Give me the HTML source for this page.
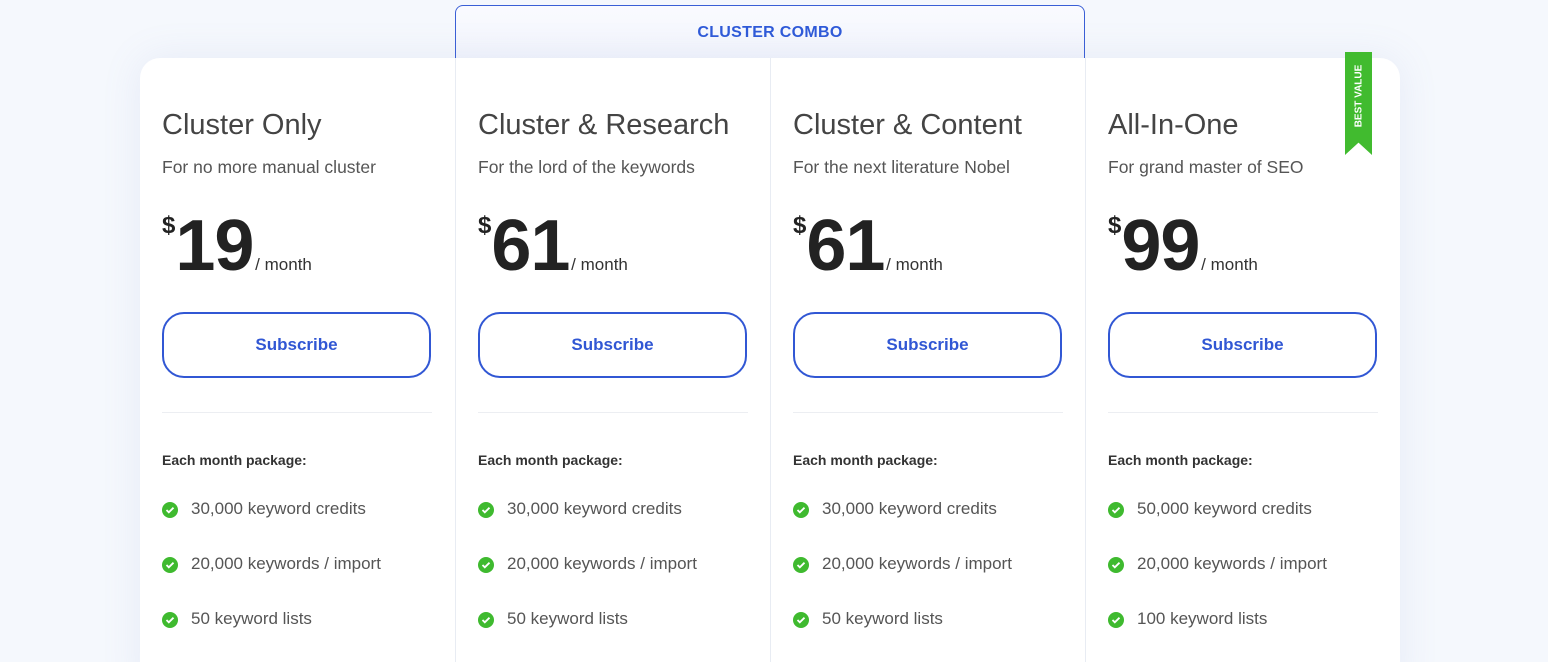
<!DOCTYPE html>
<html><head><style>
*{margin:0;padding:0;box-sizing:border-box}
html,body{width:1548px;height:662px;overflow:hidden}
body{background:#f5f8fd;font-family:"Liberation Sans",sans-serif;position:relative}
.card{position:absolute;left:140px;top:58px;width:1260px;height:640px;background:#fff;border-radius:20px;box-shadow:0 0 40px rgba(120,140,200,.12)}
.tab{position:absolute;left:455px;top:5px;width:630px;height:60px;border:1px solid #3a5fd6;border-bottom:none;border-radius:8px 8px 0 0;background:linear-gradient(#fafbff,#f1f4fc);text-align:center;color:#2f5ad8;font-weight:bold;font-size:16px;line-height:54px;letter-spacing:.3px}
.col{position:absolute;top:58px;width:315px;height:620px;}
.col.b{border-left:1px solid #e8ecf3}
.in{position:absolute;left:22px;width:270px}
h2{position:absolute;top:51px;font-size:29px;font-weight:normal;color:#444;white-space:nowrap}
.sub{position:absolute;top:99px;font-size:17.5px;color:#555;white-space:nowrap}
.price{position:absolute;top:148px;color:#222;white-space:nowrap}
.price .d{font-size:24px;font-weight:bold;vertical-align:top;position:relative;top:6px}
.price .n{font-size:72px;font-weight:bold;letter-spacing:-1px;line-height:80px}
.price .m{font-size:17px;color:#333;margin-left:-3px}
.btn{position:absolute;top:254px;width:269px;height:66px;border:2px solid #3157d4;border-radius:22px;text-align:center;line-height:62px;color:#3157d4;font-size:17px;font-weight:bold}
.hr{position:absolute;top:354px;width:270px;border-top:1px solid #eceef2}
.pk{position:absolute;top:394px;font-size:14px;font-weight:bold;color:#333}
.it{position:absolute;font-size:17px;color:#555;white-space:nowrap;padding-left:29px}
.it:before{content:"";position:absolute;left:0;top:3px;width:16px;height:16px;border-radius:50%;background:#3fba2f}
.it svg{position:absolute;left:3px;top:6px}
.rib{position:absolute;left:1345px;top:52px;width:27px;height:103px;background:#41bb2f;clip-path:polygon(0 0,100% 0,100% 100%,50% 88%,0 100%)}
.rib span{position:absolute;left:50%;top:44px;transform:translate(-50%,-50%) rotate(-90deg);color:#fff;font-size:10px;font-weight:bold;white-space:nowrap}
</style></head><body>
<div class="tab">CLUSTER COMBO</div>
<div class="card"></div>

<div class="col" style="left:140px"><div class="in">
<h2>Cluster Only</h2><div class="sub">For no more manual cluster</div>
<div class="price"><span class="d">$</span><span class="n">19</span><span class="m"> / month</span></div>
<div class="btn">Subscribe</div><div class="hr"></div><div class="pk">Each month package:</div>
<div class="it" style="top:441px"><svg width="10" height="10" viewBox="0 0 10 10"><path d="M1.5 5l2.3 2.3L8.5 2.7" stroke="#fff" stroke-width="1.8" fill="none"/></svg>30,000 keyword credits</div>
<div class="it" style="top:496px"><svg width="10" height="10" viewBox="0 0 10 10"><path d="M1.5 5l2.3 2.3L8.5 2.7" stroke="#fff" stroke-width="1.8" fill="none"/></svg>20,000 keywords / import</div>
<div class="it" style="top:551px"><svg width="10" height="10" viewBox="0 0 10 10"><path d="M1.5 5l2.3 2.3L8.5 2.7" stroke="#fff" stroke-width="1.8" fill="none"/></svg>50 keyword lists</div>
</div></div>

<div class="col b" style="left:455px"><div class="in">
<h2>Cluster &amp; Research</h2><div class="sub">For the lord of the keywords</div>
<div class="price"><span class="d">$</span><span class="n">61</span><span class="m"> / month</span></div>
<div class="btn">Subscribe</div><div class="hr"></div><div class="pk">Each month package:</div>
<div class="it" style="top:441px"><svg width="10" height="10" viewBox="0 0 10 10"><path d="M1.5 5l2.3 2.3L8.5 2.7" stroke="#fff" stroke-width="1.8" fill="none"/></svg>30,000 keyword credits</div>
<div class="it" style="top:496px"><svg width="10" height="10" viewBox="0 0 10 10"><path d="M1.5 5l2.3 2.3L8.5 2.7" stroke="#fff" stroke-width="1.8" fill="none"/></svg>20,000 keywords / import</div>
<div class="it" style="top:551px"><svg width="10" height="10" viewBox="0 0 10 10"><path d="M1.5 5l2.3 2.3L8.5 2.7" stroke="#fff" stroke-width="1.8" fill="none"/></svg>50 keyword lists</div>
</div></div>

<div class="col b" style="left:770px"><div class="in">
<h2>Cluster &amp; Content</h2><div class="sub">For the next literature Nobel</div>
<div class="price"><span class="d">$</span><span class="n">61</span><span class="m"> / month</span></div>
<div class="btn">Subscribe</div><div class="hr"></div><div class="pk">Each month package:</div>
<div class="it" style="top:441px"><svg width="10" height="10" viewBox="0 0 10 10"><path d="M1.5 5l2.3 2.3L8.5 2.7" stroke="#fff" stroke-width="1.8" fill="none"/></svg>30,000 keyword credits</div>
<div class="it" style="top:496px"><svg width="10" height="10" viewBox="0 0 10 10"><path d="M1.5 5l2.3 2.3L8.5 2.7" stroke="#fff" stroke-width="1.8" fill="none"/></svg>20,000 keywords / import</div>
<div class="it" style="top:551px"><svg width="10" height="10" viewBox="0 0 10 10"><path d="M1.5 5l2.3 2.3L8.5 2.7" stroke="#fff" stroke-width="1.8" fill="none"/></svg>50 keyword lists</div>
</div></div>

<div class="col b" style="left:1085px"><div class="in">
<h2>All-In-One</h2><div class="sub">For grand master of SEO</div>
<div class="price"><span class="d">$</span><span class="n">99</span><span class="m"> / month</span></div>
<div class="btn">Subscribe</div><div class="hr"></div><div class="pk">Each month package:</div>
<div class="it" style="top:441px"><svg width="10" height="10" viewBox="0 0 10 10"><path d="M1.5 5l2.3 2.3L8.5 2.7" stroke="#fff" stroke-width="1.8" fill="none"/></svg>50,000 keyword credits</div>
<div class="it" style="top:496px"><svg width="10" height="10" viewBox="0 0 10 10"><path d="M1.5 5l2.3 2.3L8.5 2.7" stroke="#fff" stroke-width="1.8" fill="none"/></svg>20,000 keywords / import</div>
<div class="it" style="top:551px"><svg width="10" height="10" viewBox="0 0 10 10"><path d="M1.5 5l2.3 2.3L8.5 2.7" stroke="#fff" stroke-width="1.8" fill="none"/></svg>100 keyword lists</div>
</div></div>

<div class="rib"><span>BEST VALUE</span></div>
</body></html>
